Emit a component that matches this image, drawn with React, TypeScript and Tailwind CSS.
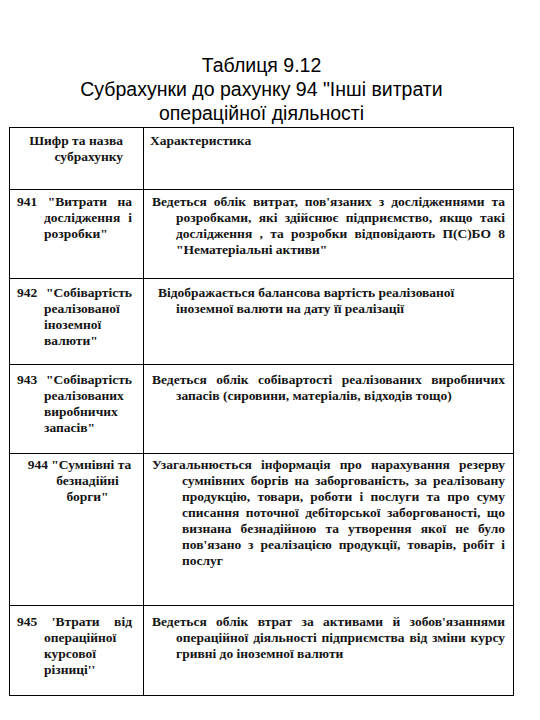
import type { ReactNode } from 'react';

type Ln = { t: string; j?: boolean; c?: string };

// одна строка ячейки: j = растянуть по ширине
function Line({ t, j, c = '' }: Ln) {
    return <div className={`${j ? 'text-justify [text-align-last:justify]' : ''} ${c}`}>{t}</div>;
}

function Row({ h, pt, left, right }: { h: string; pt: string; left: ReactNode; right: ReactNode }) {
    return (
        <div className={`flex border-b border-black ${h}`}>
            <div className={`w-[134px] shrink-0 border-r border-black ${pt}`}>{left}</div>
            <div className={`flex-1 ${pt}`}>{right}</div>
        </div>
    );
}

function LeftCell({ lines }: { lines: Ln[] }) {
    return (
        <div className="pl-[7px] pr-[11px]">
            {lines.map((l, i) => (
                <Line key={i} {...l} c={i === 0 ? '' : 'pl-[27px]'} />
            ))}
        </div>
    );
}

function RightCell({ lines, indent = 'pl-[24px]', first = 'pl-0' }: { lines: Ln[]; indent?: string; first?: string }) {
    return (
        <div className="pl-[8px] pr-[8px]">
            {lines.map((l, i) => (
                <Line key={i} {...l} c={i === 0 ? first : indent} />
            ))}
        </div>
    );
}

export default function App() {
    return (
        <div className="w-[540px] min-h-[720px] bg-white text-[#141414] pt-[53px]">
            <div className="ml-[9px] w-[505px] text-center [font-family:'Liberation_Sans',Arial,sans-serif] text-[19.5px] leading-[24px] text-black mb-[2px]">
                <div>Таблиця 9.12</div>
                <div>Субрахунки до рахунку 94 "Інші витрати</div>
                <div>операційної діяльності</div>
            </div>

            <div className="ml-[9px] w-[505px] border border-black [font-family:'Liberation_Serif','Times_New_Roman',serif] font-bold text-[13.5px] leading-[16px]">
                {/* шапка */}
                <Row
                    h="h-[62px]"
                    pt="pt-[5px]"
                    left={
                        <div className="pr-[20px] text-right">
                            <div>Шифр та назва</div>
                            <div>субрахунку</div>
                        </div>
                    }
                    right={<div className="pl-[6px]">Характеристика</div>}
                />

                <Row
                    h="h-[89px]"
                    pt="pt-[4px]"
                    left={<LeftCell lines={[{ t: '941 "Витрати на', j: true }, { t: 'дослідження і', j: true }, { t: 'розробки"' }]} />}
                    right={
                        <RightCell
                            lines={[
                                { t: "Ведеться облік витрат, пов'язаних з дослідженнями та", j: true },
                                { t: 'розробками, які здійснює підприємство, якщо такі', j: true },
                                { t: 'дослідження , та розробки відповідають П(С)БО 8', j: true },
                                { t: '"Нематеріальні активи"' },
                            ]}
                        />
                    }
                />

                <Row
                    h="h-[86px]"
                    pt="pt-[6px]"
                    left={
                        <LeftCell
                            lines={[{ t: '942 "Собівартість', j: true }, { t: 'реалізованої' }, { t: 'іноземної' }, { t: 'валюти"' }]}
                        />
                    }
                    right={
                        <RightCell
                            first="pl-[6px]"
                            lines={[
                                { t: 'Відображається балансова вартість реалізованої' },
                                { t: 'іноземної валюти на дату її реалізації' },
                            ]}
                        />
                    }
                />

                <Row
                    h="h-[89px]"
                    pt="pt-[7px]"
                    left={
                        <LeftCell
                            lines={[{ t: '943 "Собівартість', j: true }, { t: 'реалізованих' }, { t: 'виробничих' }, { t: 'запасів"' }]}
                        />
                    }
                    right={
                        <RightCell
                            lines={[
                                { t: 'Ведеться облік собівартості реалізованих виробничих', j: true },
                                { t: 'запасів (сировини, матеріалів, відходів тощо)' },
                            ]}
                        />
                    }
                />

                <Row
                    h="h-[152px]"
                    pt="pt-[3px]"
                    left={
                        <div className="text-center">
                            <div className="pl-[6px]">944 "Сумнівні та</div>
                            <div className="pl-[34px] pr-[12px]">безнадійні</div>
                            <div className="pl-[34px] pr-[12px]">борги"</div>
                        </div>
                    }
                    right={
                        <RightCell
                            indent="pl-[30px]"
                            lines={[
                                { t: 'Узагальнюється інформація про нарахування резерву', j: true },
                                { t: 'сумнівних боргів на заборгованість, за реалізовану', j: true },
                                { t: 'продукцію, товари, роботи і послуги та про суму', j: true },
                                { t: 'списання поточної дебіторської заборгованості, що', j: true },
                                { t: 'визнана безнадійною та утворення якої не було', j: true },
                                { t: "пов'язано з реалізацією продукції, товарів, робіт і", j: true },
                                { t: 'послуг' },
                            ]}
                        />
                    }
                />

                <Row
                    h="h-[89px] border-b-0"
                    pt="pt-[8px]"
                    left={
                        <LeftCell
                            lines={[{ t: "945 'Втрати від", j: true }, { t: 'операційної' }, { t: 'курсової' }, { t: "різниці''" }]}
                        />
                    }
                    right={
                        <RightCell
                            lines={[
                                { t: "Ведеться облік втрат за активами й зобов'язаннями", j: true },
                                { t: 'операційної діяльності підприємства від зміни курсу', j: true },
                                { t: 'гривні до іноземної валюти' },
                            ]}
                        />
                    }
                />
            </div>
        </div>
    );
}
